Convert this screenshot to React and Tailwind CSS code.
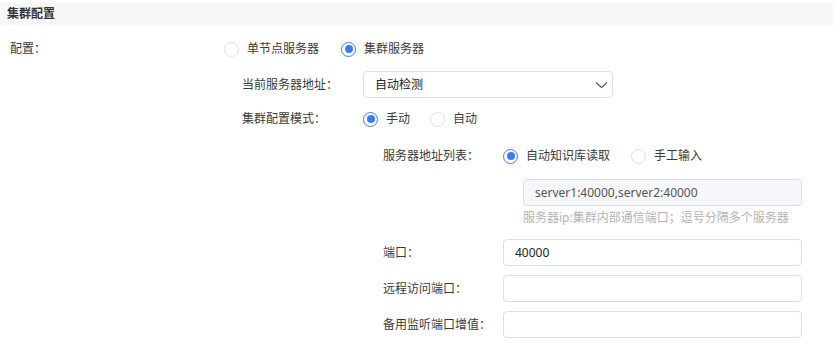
import React from 'react'

const font = { fontFamily: '"Noto Sans", "Noto Sans CJK SC", sans-serif' }

function Radio({ checked, label }) {
  return (
    <label className="flex items-center gap-[8px] cursor-pointer">
      <span
        className={`flex items-center justify-center w-[15px] h-[15px] rounded-full border bg-white ${
          checked ? 'border-[#3b7cf6]' : 'border-[#dcdfe6]'
        }`}
      >
        {checked && <span className="w-[8px] h-[8px] rounded-full bg-[#3b7cf6]" />}
      </span>
      <span className="text-[12px] text-[#3a3a3a]">{label}</span>
    </label>
  )
}

function Field({ value, disabled, className = '' }) {
  return (
    <div
      className={`h-[27px] flex items-center px-[11px] rounded-[4px] border border-[#dcdfe6] text-[12px] ${
        disabled ? 'bg-[#f5f7fa] text-[#555]' : 'bg-white text-[#222]'
      } ${className}`}
    >
      {value}
    </div>
  )
}

export default function App() {
  return (
    <div className="w-[839px] h-[353px] bg-white overflow-hidden leading-none" style={font}>
      <div className="mt-[3px] mr-[6px] h-[22px] bg-[#f7f7f7] flex items-center px-[7px] text-[12px] font-bold text-[#333]">
        集群配置
      </div>

      {/* 配置 */}
      <div className="mt-[10px] h-[28px] flex items-center pl-[10px]">
        <span className="w-[214px] text-[12px] text-[#3a3a3a]">配置：</span>
        <div className="flex items-center gap-[22px]">
          <Radio label="单节点服务器" />
          <Radio checked label="集群服务器" />
        </div>
      </div>

      {/* 当前服务器地址 */}
      <div className="mt-[8px] flex items-center pl-[242px]">
        <span className="w-[121px] text-[12px] text-[#3a3a3a]">当前服务器地址：</span>
        <div className="w-[250px] h-[27px] flex items-center justify-between pl-[11px] pr-[4px] rounded-[4px] border border-[#dcdfe6] bg-white text-[12px] text-[#222]">
          自动检测
          <svg width="13" height="8" viewBox="0 0 13 8" fill="none">
            <polyline points="1,1.5 6.5,6.5 12,1.5" stroke="#555" strokeWidth="1.1" />
          </svg>
        </div>
      </div>

      {/* 集群配置模式 */}
      <div className="mt-[7px] h-[28px] flex items-center pl-[242px]">
        <span className="w-[121px] text-[12px] text-[#3a3a3a]">集群配置模式：</span>
        <div className="flex items-center gap-[20px]">
          <Radio checked label="手动" />
          <Radio label="自动" />
        </div>
      </div>

      {/* 服务器地址列表 */}
      <div className="mt-[9px] h-[28px] flex items-center pl-[383px]">
        <span className="w-[120px] text-[12px] text-[#3a3a3a]">服务器地址列表：</span>
        <div className="flex items-center gap-[21px]">
          <Radio checked label="自动知识库读取" />
          <Radio label="手工输入" />
        </div>
      </div>

      <div className="mt-[9px] pl-[523px]">
        <Field disabled value="server1:40000,server2:40000" className="w-[279px]" />
        <div className="mt-[6px] text-[12px] text-[#b4b4b4]">服务器ip:集群内部通信端口；逗号分隔多个服务器</div>
      </div>

      {[
        ['端口：', '40000'],
        ['远程访问端口：', ''],
        ['备用监听端口增值：', ''],
      ].map(([label, value], i) => (
        <div key={label} className={`${i === 0 ? 'mt-[15px]' : 'mt-[9px]'} flex items-center pl-[383px]`}>
          <span className="w-[120px] text-[12px] text-[#3a3a3a]">{label}</span>
          <Field value={value} className="w-[299px]" />
        </div>
      ))}
    </div>
  )
}
